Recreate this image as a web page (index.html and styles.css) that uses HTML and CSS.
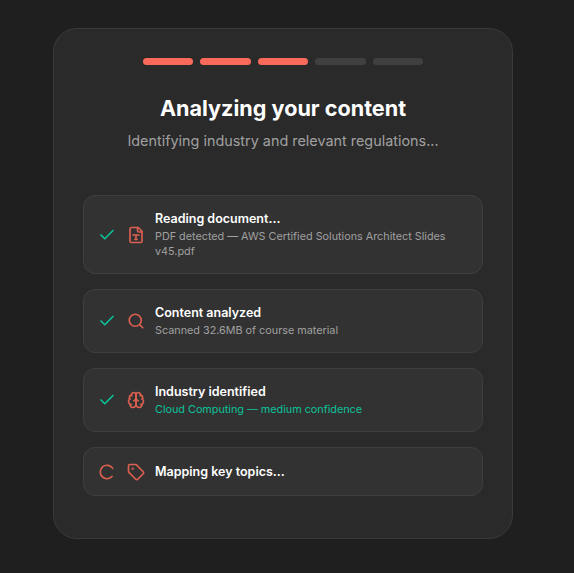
FILE: index.html
```html
<!DOCTYPE html>
<html lang="en">
<head>
<meta charset="utf-8">
<title>Analyzing your content</title>
<link rel="stylesheet" href="styles.css">
</head>
<body>
<main class="card">
  <div class="progress">
    <span class="seg on"></span><span class="seg on"></span><span class="seg on"></span><span class="seg"></span><span class="seg"></span>
  </div>
  <h1 class="title">Analyzing your content</h1>
  <p class="subtitle">Identifying industry and relevant regulations...</p>
  <div class="steps">
    <div class="step">
      <div class="icons">
        <svg class="ico check" viewBox="0 0 24 24"><path d="M20 6 9 17l-5-5"/></svg>
        <svg class="ico accent" viewBox="0 0 24 24"><path d="M15 2H6a2 2 0 0 0-2 2v16a2 2 0 0 0 2 2h12a2 2 0 0 0 2-2V7z"/><path d="M14 2v4a2 2 0 0 0 2 2h4"/><path d="M8 12h8M12 12v6M10.5 18h3"/></svg>
      </div>
      <div class="text">
        <div class="name">Reading document...</div>
        <div class="detail">PDF detected — AWS Certified Solutions Architect Slides v45.pdf</div>
      </div>
    </div>
    <div class="step">
      <div class="icons">
        <svg class="ico check" viewBox="0 0 24 24"><path d="M20 6 9 17l-5-5"/></svg>
        <svg class="ico accent" viewBox="0 0 24 24"><circle cx="11" cy="11" r="8"/><path d="m21 21-4.3-4.3"/></svg>
      </div>
      <div class="text">
        <div class="name">Content analyzed</div>
        <div class="detail">Scanned 32.6MB of course material</div>
      </div>
    </div>
    <div class="step">
      <div class="icons">
        <svg class="ico check" viewBox="0 0 24 24"><path d="M20 6 9 17l-5-5"/></svg>
        <svg class="ico accent" viewBox="0 0 24 24"><path d="M12 5a3 3 0 1 0-5.997.125 4 4 0 0 0-2.526 5.77 4 4 0 0 0 .556 6.588A4 4 0 1 0 12 18Z"/><path d="M12 5a3 3 0 1 1 5.997.125 4 4 0 0 1 2.526 5.77 4 4 0 0 1-.556 6.588A4 4 0 1 1 12 18Z"/><path d="M15 13a4.5 4.5 0 0 1-3-4 4.5 4.5 0 0 1-3 4"/><path d="M17.599 6.5a3 3 0 0 0 .399-1.375"/><path d="M6.003 5.125A3 3 0 0 0 6.401 6.5"/><path d="M3.477 10.896a4 4 0 0 1 .585-.396"/><path d="M19.938 10.5a4 4 0 0 1 .585.396"/><path d="M6 18a4 4 0 0 1-1.967-.516"/><path d="M19.967 17.484A4 4 0 0 1 18 18"/></svg>
      </div>
      <div class="text">
        <div class="name">Industry identified</div>
        <div class="detail green">Cloud Computing — medium confidence</div>
      </div>
    </div>
    <div class="step">
      <div class="icons">
        <svg class="ico accent" viewBox="0 0 24 24"><path transform="rotate(40 12 12)" d="M21 12a9 9 0 1 1-6.219-8.56"/></svg>
        <svg class="ico accent" viewBox="0 0 24 24"><path d="M12.586 2.586A2 2 0 0 0 11.172 2H4a2 2 0 0 0-2 2v7.172a2 2 0 0 0 .586 1.414l8.704 8.704a2.426 2.426 0 0 0 3.42 0l6.58-6.58a2.426 2.426 0 0 0 0-3.42z"/><circle class="dot" cx="7.5" cy="7.5" r=".5"/></svg>
      </div>
      <div class="text">
        <div class="name">Mapping key topics...</div>
      </div>
    </div>
  </div>
</main>
</body>
</html>
```
FILE: styles.css
```css
* { box-sizing: border-box; }
html, body { height: 100%; }
body {
  margin: 0;
  background: #1f1f1f;
  font-family: Inter, "Liberation Sans", sans-serif;
  padding: 28px 0 0 53px;
}
.card {
  width: 460px;
  height: 511px;
  padding: 29px 29px 0;
  background: #2a2a2a;
  border: 1px solid #3a3a3a;
  border-radius: 24px;
}
.progress {
  display: flex;
  justify-content: center;
  gap: 7px;
  height: 7px;
}
.seg {
  width: 50.6px;
  border-radius: 4px;
  background: #404040;
}
.seg.on { background: #f96a5a; }
.title {
  margin: 27px 0 0;
  text-align: center;
  font-size: 21.6px;
  line-height: 32px;
  font-weight: 700;
  color: #fff;
}
.subtitle {
  margin: 6px 0 0;
  text-align: center;
  font-size: 14.4px;
  line-height: 22px;
  color: #a0a0a0;
}
.steps {
  margin-top: 43px;
  display: flex;
  flex-direction: column;
  gap: 15px;
}
.step {
  display: flex;
  align-items: center;
  gap: 10px;
  min-height: 48px;
  padding: 14.5px 14px;
  background: #323232;
  border: 1px solid #3f3f3f;
  border-radius: 12px;
}
.icons {
  flex: none;
  display: flex;
  align-items: center;
  gap: 11px;
}
.ico {
  flex: none;
  width: 18px;
  height: 18px;
  fill: none;
  stroke-width: 2.2;
  stroke-linecap: round;
  stroke-linejoin: round;
}
.check { stroke: #0cc39a; }
.accent { stroke: #dc6050; }
.dot { fill: #dc6050; }
.text { min-width: 0; }
.name {
  font-size: 12.5px;
  line-height: 16px;
  font-weight: 600;
  color: #fff;
}
.detail {
  margin-top: 2px;
  font-size: 10.8px;
  line-height: 15px;
  color: #a0a0a0;
}
.green { color: #0cc39a; }
```
